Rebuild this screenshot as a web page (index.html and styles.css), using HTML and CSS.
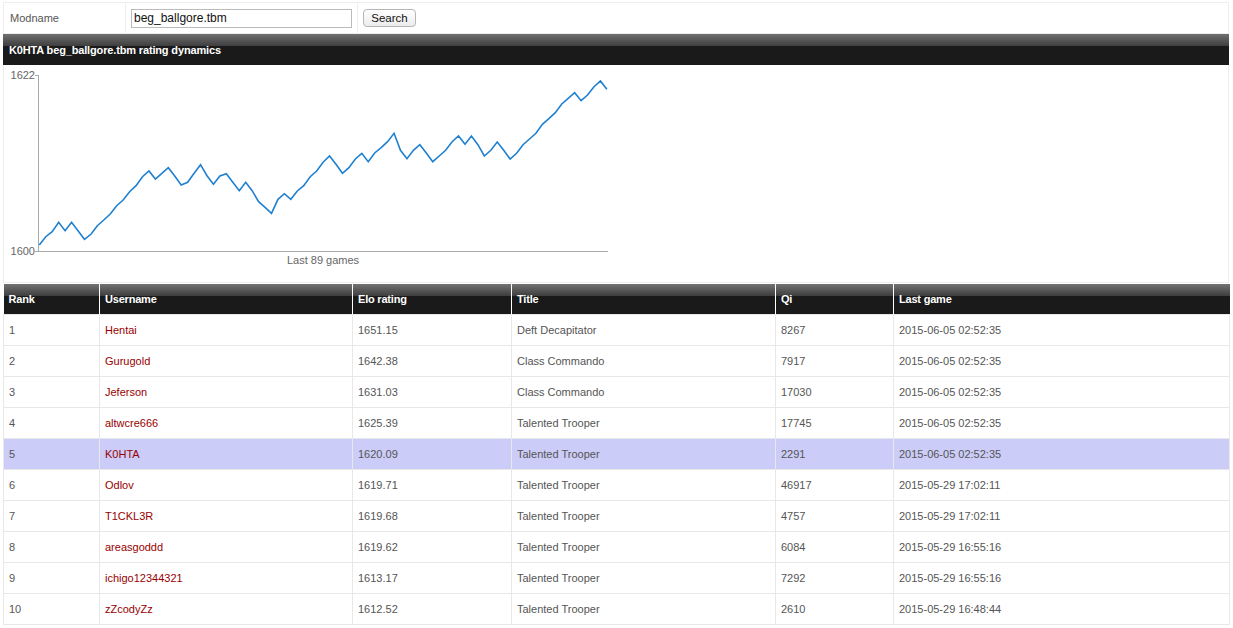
FILE: index.html
```html
<!DOCTYPE html>
<html>
<head>
<meta charset="utf-8">
<title>Rating</title>
<link rel="stylesheet" href="styles.css">
</head>
<body>
<div class="wrap">
  <form class="search-row">
    <div class="cell cell-label">Modname</div>
    <div class="cell cell-input"><input class="mod-input" type="text" value="beg_ballgore.tbm"></div>
    <div class="cell cell-btn"><button class="btn" type="button">Search</button></div>
  </form>
  <div class="bar">K0HTA beg_ballgore.tbm rating dynamics</div>
  <div class="chart">
    <svg class="chart-svg" width="620" height="217" viewBox="4 65 620 217">
      <line x1="38.5" y1="75" x2="38.5" y2="251" class="axis"/>
      <line x1="38" y1="251.5" x2="608" y2="251.5" class="axis"/>
      <line x1="35" y1="75.5" x2="38" y2="75.5" class="axis"/>
      <line x1="35" y1="251.5" x2="38" y2="251.5" class="axis"/>
      <text x="35" y="79" class="lbl" text-anchor="end">1622</text>
      <text x="35" y="255" class="lbl" text-anchor="end">1600</text>
      <text x="323" y="264" class="lbl" text-anchor="middle">Last 89 games</text>
      <polyline class="line" points="39.3,245 45.75,236.7 52.2,231.7 58.65,222.3 65.1,230.7 71.55,222.3 78,230.7 84.45,239.3 90.9,234.3 97.35,225.7 103.8,220 110.25,214 116.7,205.7 123.15,200 129.6,191.7 136.05,185.7 142.5,176.7 148.95,171 155.4,179 161.85,173.3 168.3,167.7 174.75,176 181.2,185 187.65,182.3 194.1,173.3 200.55,164.7 207,175.7 213.45,184.3 219.9,176 226.35,173.7 232.8,182.3 239.25,190.7 245.7,182.3 252.15,190.7 258.6,201.7 265.05,207.3 271.5,213.3 277.95,199.3 284.4,193.7 290.85,199.3 297.3,191 303.75,185.7 310.2,176.7 316.65,171 323.1,162.3 329.55,156 336,164.3 342.45,173.3 348.9,167.7 355.35,159 361.8,153.3 368.25,161.7 374.7,153 381.15,147.7 387.6,141.7 394.05,133.3 400.5,150.3 406.95,158.7 413.4,150.3 419.85,144.7 426.3,153 432.75,161.7 439.2,156 445.65,150.3 452.1,141.7 458.55,136 465,144.3 471.45,136 477.9,144.7 484.35,156 490.8,150.3 497.25,142 503.7,150.3 510.15,159 516.6,153.3 523.05,144.7 529.5,139 535.95,133.3 542.4,124.3 548.85,118.7 555.3,112.7 561.75,104 568.2,98.3 574.65,92.7 581.1,100.7 587.55,95 594,86.7 600.45,81 606.9,89.3"/>
    </svg>
  </div>
  <table class="ranking">
    <colgroup>
      <col class="c-rank"><col class="c-user"><col class="c-elo"><col class="c-title"><col class="c-qi"><col class="c-last">
    </colgroup>
    <thead>
      <tr><th>Rank</th><th>Username</th><th>Elo rating</th><th>Title</th><th>Qi</th><th>Last game</th></tr>
    </thead>
    <tbody>
      <tr><td>1</td><td class="user">Hentai</td><td>1651.15</td><td>Deft Decapitator</td><td>8267</td><td>2015-06-05 02:52:35</td></tr>
      <tr><td>2</td><td class="user">Gurugold</td><td>1642.38</td><td>Class Commando</td><td>7917</td><td>2015-06-05 02:52:35</td></tr>
      <tr><td>3</td><td class="user">Jeferson</td><td>1631.03</td><td>Class Commando</td><td>17030</td><td>2015-06-05 02:52:35</td></tr>
      <tr><td>4</td><td class="user">altwcre666</td><td>1625.39</td><td>Talented Trooper</td><td>17745</td><td>2015-06-05 02:52:35</td></tr>
      <tr class="me"><td>5</td><td class="user">K0HTA</td><td>1620.09</td><td>Talented Trooper</td><td>2291</td><td>2015-06-05 02:52:35</td></tr>
      <tr><td>6</td><td class="user">Odlov</td><td>1619.71</td><td>Talented Trooper</td><td>46917</td><td>2015-05-29 17:02:11</td></tr>
      <tr><td>7</td><td class="user">T1CKL3R</td><td>1619.68</td><td>Talented Trooper</td><td>4757</td><td>2015-05-29 17:02:11</td></tr>
      <tr><td>8</td><td class="user">areasgoddd</td><td>1619.62</td><td>Talented Trooper</td><td>6084</td><td>2015-05-29 16:55:16</td></tr>
      <tr><td>9</td><td class="user">ichigo12344321</td><td>1613.17</td><td>Talented Trooper</td><td>7292</td><td>2015-05-29 16:55:16</td></tr>
      <tr><td>10</td><td class="user">zZcodyZz</td><td>1612.52</td><td>Talented Trooper</td><td>2610</td><td>2015-05-29 16:48:44</td></tr>
    </tbody>
  </table>
</div>
</body>
</html>
```
FILE: styles.css
```css
html, body {
  margin: 0;
  padding: 0;
  background: #fff;
}
body {
  font-family: "Liberation Sans", Arial, sans-serif;
  font-size: 11px;
  color: #555;
}
.wrap {
  margin: 2px 0 0 3px;
  width: 1226px;
}
.search-row {
  display: flex;
  margin: 0;
  height: 32px;
  box-sizing: border-box;
  border: 1px solid #eee;
}
.cell {
  display: flex;
  align-items: center;
  box-sizing: border-box;
}
.cell-label {
  width: 122px;
  padding-left: 6px;
  border-right: 1px solid #eee;
  color: #555;
}
.cell-input {
  width: 232px;
  padding-left: 5px;
  border-right: 1px solid #eee;
}
.cell-btn {
  flex: 1;
  padding-left: 5px;
}
.mod-input {
  width: 221px;
  height: 19px;
  box-sizing: border-box;
  margin: 0;
  border: 1px solid #bbb;
  padding: 0 2px;
  font-family: "Liberation Sans", Arial, sans-serif;
  font-size: 12px;
  color: #111;
}
.btn {
  height: 18px;
  width: 53px;
  margin: 0;
  padding: 0;
  border: 1px solid #b5b5b5;
  border-radius: 4px;
  background: linear-gradient(#fff, #ececec);
  font-family: "Liberation Sans", Arial, sans-serif;
  font-size: 11.5px;
  color: #111;
}
.bar {
  height: 31px;
  box-sizing: border-box;
  padding: 9px 0 0 6px;
  background: linear-gradient(#707070 0, #3e3e3e 12px, #1a1a1a 12px, #1a1a1a 100%);
  color: #fff;
  font-weight: bold;
  font-size: 11px;
  letter-spacing: -0.15px;
  line-height: 14px;
}
.chart {
  height: 218px;
  box-sizing: border-box;
  border: 1px solid #eee;
  border-top: 0;
}
.chart-svg {
  display: block;
}
.axis {
  stroke: #aaa;
  stroke-width: 1;
}
.lbl {
  font-family: "Liberation Sans", Arial, sans-serif;
  font-size: 11px;
  fill: #666;
}
.line {
  fill: none;
  stroke: #1f80d0;
  stroke-width: 1.6;
  stroke-linejoin: miter;
}
.ranking {
  margin-top: 1px;
  border-collapse: collapse;
  width: 1226px;
  table-layout: fixed;
  font-size: 11px;
}
.c-rank { width: 96px; }
.c-user { width: 253px; }
.c-elo { width: 159px; }
.c-title { width: 264px; }
.c-qi { width: 118px; }
.c-last { width: 336px; }
.ranking th {
  height: 29px;
  padding: 0 5px 1px;
  text-align: left;
  color: #fff;
  font-weight: bold;
  letter-spacing: -0.2px;
  background: linear-gradient(#727272 0, #3e3e3e 12px, #1a1a1a 12px, #1a1a1a 100%);
  border-left: 1px solid #fff;
}
.ranking th:first-child {
  border-left: 0;
}
.ranking td {
  height: 30px;
  padding: 0 5px;
  border: 1px solid #e8e8e8;
  color: #555;
  white-space: nowrap;
}
.ranking td.user {
  color: #900;
}
.ranking tr.me td {
  background: #ccccf8;
}
```
